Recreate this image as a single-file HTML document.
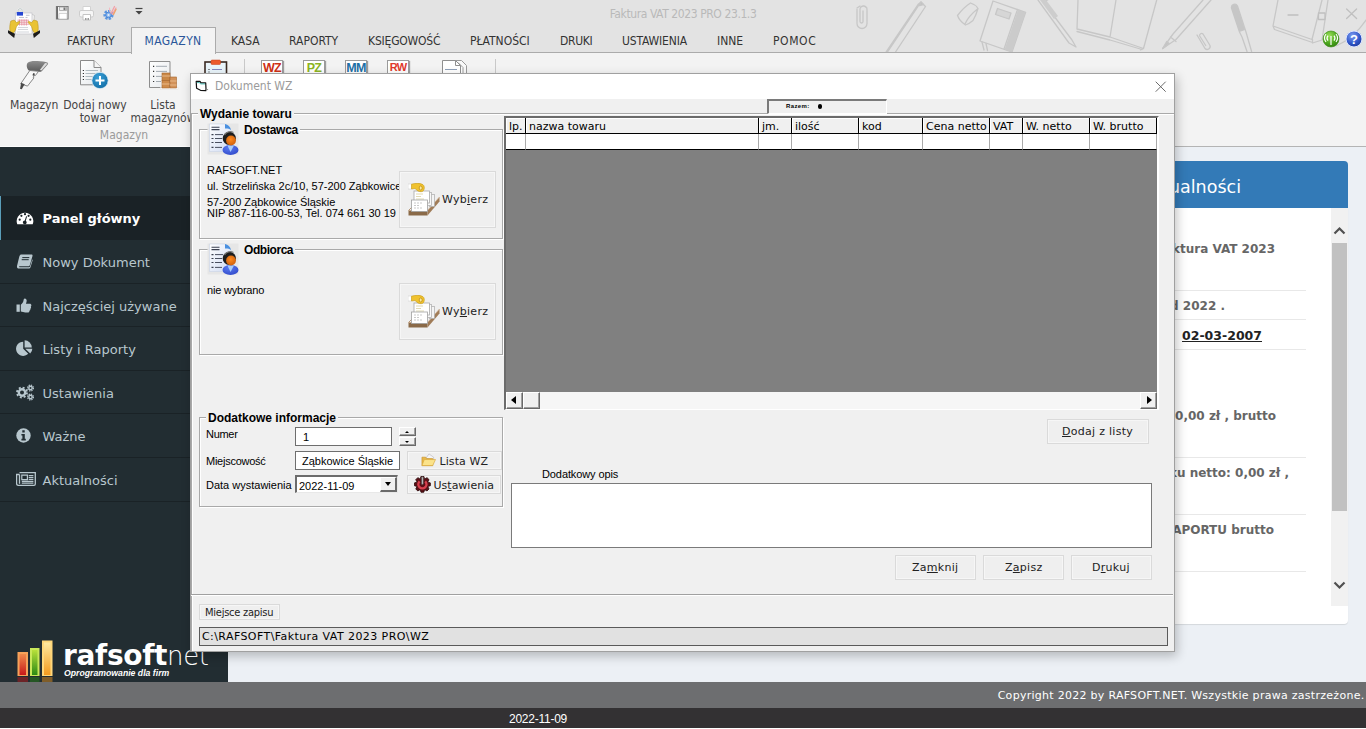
<!DOCTYPE html>
<html lang="pl">
<head>
<meta charset="utf-8">
<title>Faktura VAT 2023 PRO 23.1.3</title>
<style>
*{box-sizing:border-box;margin:0;padding:0}
html,body{width:1366px;height:729px;overflow:hidden;background:#fff}
body{position:relative;font-family:"Liberation Sans",sans-serif;font-size:11px;color:#000}
.abs{position:absolute}
.seg{font-family:"DejaVu Sans Condensed","Liberation Sans",sans-serif;font-size:12px}
.ver{font-family:"DejaVu Sans","Liberation Sans",sans-serif}
/* ---------- ribbon ---------- */
#rtop{left:0;top:0;width:1366px;height:53px;background:#e3e3e3;border-bottom:1px solid #ababab;overflow:hidden}
#rbody{left:0;top:53px;width:1366px;height:94px;background:#f3f3f3;border-bottom:1px solid #b4b4b4}
#title{left:0;top:7.400px;width:1366px;text-align:center;color:#b9b9b9;font-size:12px;letter-spacing:-.41px}
.tab{top:34px;color:#333;white-space:nowrap;line-height:14px}
#tabact{left:131px;top:27px;width:85px;height:27px;background:#f3f3f3;border:1px solid #ababab;border-bottom:none}
.rlbl{color:#444;text-align:center;white-space:nowrap;line-height:13px}
/* ---------- sidebar ---------- */
#side{left:0;top:147px;width:228px;height:535px;background:#222d32}
.mi{left:0;width:228px;height:43.600px;box-shadow:inset 0 -1px 0 #1a2226;color:#b8c7ce;font-size:13px;line-height:16px}
.mi span{position:absolute;left:42.500px;top:15px;white-space:nowrap}
.mi svg{position:absolute;left:15.500px}
.mi.act{background:#1a2226;box-shadow:inset 1px 0 0 #5a9db8;color:#fff;font-weight:bold}
/* ---------- content ---------- */
#content{left:228px;top:147px;width:1138px;height:535px;background:#ecf0f5}
#foot{left:0;top:682px;width:1366px;height:26px;background:#6d6e70;color:#fff}
#status{left:0;top:708px;width:1366px;height:20px;background:#333133;color:#fff}
/* ---------- dialog ---------- */
#dlg{left:191px;top:74px;width:983px;height:577px;background:#f0f0f0;box-shadow:0 0 0 1px #a0a0a0,2px 4px 10px 1px rgba(0,0,0,.24);overflow:hidden}
#dtitle{left:0;top:0;width:984px;height:26px;background:#fff}
.gb{border:1px solid #a9a9a9;box-shadow:1px 1px 0 #fff, inset 1px 1px 0 #fff}
.leg{background:#f0f0f0;font-weight:bold;font-size:12px;line-height:14px;white-space:nowrap;padding:0 2px}
.btn{border:1px solid #dadada;background:#efefef;box-shadow:inset 0 0 0 1px #f6f6f6}
.btn .t{position:absolute;white-space:nowrap;font-family:"DejaVu Sans","Liberation Sans",sans-serif;font-size:11px;letter-spacing:.28px;line-height:14px;color:#222}
.txt{white-space:nowrap;line-height:13px}
u{text-decoration:underline}

.inp{background:#fff;border:1px solid #6e6e6e}
.inp span{position:absolute;top:3px;white-space:nowrap;line-height:13px;font-size:11px}
#datecb{background:#fff;border:1px solid #e8e8e8;border-top:2px solid #6c6c6c;border-left:2px solid #6c6c6c}
#dd{right:0;top:0;width:17px;height:15px;background:#f0f0f0;border:1px solid #fff;border-right:2px solid #6a6a6a;border-bottom:2px solid #6a6a6a}
#dd:after{content:"";position:absolute;left:4px;top:4px;border:3px solid transparent;border-top:4px solid #000;border-bottom:none}
#spin{}
#razem{border:2px solid #7a7a7a;border-right:1px solid #fff;border-bottom:1px solid #fff;background:#f0f0f0}
#grid{background:#808080;border:1px solid #fff;border-top:2px solid #6b6b6b;border-left:2px solid #6b6b6b}
.ico-person{width:32px;height:32px}

.hc{position:absolute;top:0;height:16px;background:#f0f0f0;border-right:1px solid #000;border-bottom:1px solid #000;box-shadow:inset 1px 1px 0 #fff;overflow:hidden}
.hc span{position:absolute;left:3px;top:2px;font-family:"DejaVu Sans","Liberation Sans",sans-serif;font-size:11px;line-height:14px;white-space:nowrap}
.dc{position:absolute;top:16px;height:16px;background:#fff;border-right:1px solid #aaa;border-bottom:1px solid #000}
#hsb{background:#f6f6f6}
.sbb{width:17px;height:17px;background:#f0f0f0;border:1px solid #fff;border-right-color:#696969;border-bottom-color:#696969;box-shadow:inset -1px -1px 0 #a0a0a0}
.sbb i{position:absolute;top:3px;border:4px solid transparent;border-left-width:0;border-right-width:0;width:0;height:0}

.smico{top:60px;width:22px;height:24px;background:#fff;border:1px solid #9b9b9b;box-shadow:1px 1px 1px rgba(0,0,0,.35);text-align:center;overflow:hidden}
.smico b{display:block;font-family:"Liberation Sans",sans-serif;font-size:12.500px;line-height:14px;margin:0 -3px 0 -3px;letter-spacing:-.7px}

.nw{font-family:"DejaVu Sans","Liberation Sans",sans-serif;font-weight:bold;font-size:12px;line-height:16px;color:#666;white-space:nowrap}
.hr{left:900px;width:178px;height:1px;background:#e8e8e8}

.sp{left:0;width:17px;height:9px;background:#f0f0f0;border:1px solid #fff;border-right-color:#696969;border-bottom-color:#696969;box-shadow:inset -1px -1px 0 #a0a0a0}
.sp i{position:absolute;left:5px;width:0;height:0;border-left:2px solid transparent;border-right:2px solid transparent}
</style>
</head>
<body>
<!-- RIBBON TOP -->
<div id="rtop" class="abs">
  <div id="title" class="abs seg">Faktura VAT 2023 PRO 23.1.3</div>
</div>
<div id="rbody" class="abs"></div>
<div id="tabact" class="abs"></div>
<div class="abs" style="left:0;top:146px;width:228px;height:1px;background:#fcfcfc"></div>
<div class="abs tab seg" style="left:67px;letter-spacing:.17px">FAKTURY</div>
<div class="abs tab seg" style="left:144.500px;color:#2b579a;letter-spacing:.4px">MAGAZYN</div>
<div class="abs tab seg" style="left:231px">KASA</div>
<div class="abs tab seg" style="left:289px">RAPORTY</div>
<div class="abs tab seg" style="left:368px;letter-spacing:-.2px">KSIĘGOWOŚĆ</div>
<div class="abs tab seg" style="left:470px">PŁATNOŚCI</div>
<div class="abs tab seg" style="left:560px;letter-spacing:-.3px">DRUKI</div>
<div class="abs tab seg" style="left:622px;letter-spacing:-.15px">USTAWIENIA</div>
<div class="abs tab seg" style="left:717px">INNE</div>
<div class="abs tab seg" style="left:773px;letter-spacing:.6px">POMOC</div>


<!-- header art -->
<svg class="abs" style="left:840px;top:0" width="526" height="52" viewBox="840 0 526 52" fill="none" stroke="#c7c7c7" stroke-width="1.300" stroke-linecap="round" stroke-linejoin="round">
  <path d="M857 9.500v14a5 5 0 0 0 10 0v-14a3.500 3.500 0 0 0-7 0v12a1.500 1.500 0 0 0 3 0v-10.500M857 8l3-2M867 8l-3-2"/>
  <path d="M921 2l-33.500 50M925.500 6.500l-30 45.500M918 4.500l-32 47.500M921 2l4.500 4.500M921 2l-3 2.500"/><path d="M921 2l2.500 2.500-4 1z" fill="#c0c0c0"/>
  <path d="M957.500 15.500q6-8 13-12.500 5 1.500 7.500 5.500-2 7-5 12-4 3.500-7.500 4.500-6-4-8-9.500zM965 24q3.500-8 12.500-15"/>
  <path d="M993 1l32.600 11.400-13.600 39.600-32-11zM1017.500 9.500l-13.500 39.500"/>
  <path d="M1018 9.700l7.600 2.700-13.600 39.600-7.500-2.500z" fill="#cbcbcb" stroke="none"/>
  <path d="M997.500 8.500l13.500 4.500-2 6-13.500-4.500z" fill="#d6d6d6"/>
  <path d="M982 42l2 8M986 43.500l1.500 7"/>
  <path d="M1042 0l30 40 4 7-7-4-31-43M1044 2l5-3" /><path d="M1040 0h6l12 16-4 3z" fill="#cdcdcd" stroke="none"/>
  <path d="M1078 0l-1 29 33 8 33.500 11.500 13.200-48.500M1110 37l6-37M1077 31.500l33 8.500 32 9.500M1143.500 48.500l-3 1.500"/>
  <path d="M1203 0l-30 34-10.300 14.500 13.300-9 35-39.500M1170.500 37l5.500 4.500"/><path d="M1162.700 48.500l4-7 2.500 2z" fill="#c4c4c4"/>
  <path d="M1197 35l8 13.500a3 3 0 0 0 5-3l-7-11.500a2 2 0 0 0-3.300 2l6 9.500"/>
  <path d="M1231.500 8a3.200 3.200 0 0 1 6-2l6.500 20 2 6 5.600 19.500M1231.500 8l8 24 2.500 5 5 14.500"/><path d="M1231.500 8a3.200 3.200 0 0 1 6-2l7.500 24-5.500 2z" fill="#c6c6c6" stroke="none"/>
  <path d="M1278 0l-5 26 39 13.500 10-39.500M1273 26l1.500 3.500 38 13 0-3M1328 0l-6 40-9.500 3M1366 20q-12 18-30 26"/>
  <path d="M1288 15h10M1318.500 13h6.500v6.500h-6.500zM1346.600 9l10 9.500M1356.600 9l-10 9.500" stroke="#c0c0c0"/>
</svg>
<!-- round icons -->
<svg class="abs" style="left:1322px;top:29px" width="42" height="20" viewBox="0 0 42 20">
  <defs>
    <radialGradient id="gg" cx=".4" cy=".3" r=".8"><stop offset="0" stop-color="#9be05a"/><stop offset=".6" stop-color="#4aa51c"/><stop offset="1" stop-color="#2d7a10"/></radialGradient>
    <radialGradient id="gb" cx=".4" cy=".3" r=".8"><stop offset="0" stop-color="#7d9cf0"/><stop offset=".6" stop-color="#2f55c8"/><stop offset="1" stop-color="#1b3590"/></radialGradient>
  </defs>
  <circle cx="9" cy="10" r="8" fill="url(#gg)" stroke="#3a8a14" stroke-width=".6"/>
  <path d="M9 7v9M6 6.5a4 4 0 0 0 0 5M12 6.5a4 4 0 0 1 0 5M4 5a6.5 6.5 0 0 0 0 8M14 5a6.5 6.5 0 0 1 0 8" stroke="#fff" stroke-width="1.2" fill="none"/>
  <circle cx="32" cy="10" r="8" fill="url(#gb)" stroke="#dfe6ff" stroke-width="1"/>
  <text x="32" y="14.5" text-anchor="middle" font-family="Liberation Sans, sans-serif" font-weight="bold" font-size="13" fill="#fff">?</text>
</svg>
<!-- app icon -->
<svg class="abs" style="left:6px;top:6px" width="36" height="34" viewBox="6 6 36 34">
  <path d="M18.200 12.500v-2a2 2 0 0 1 4 0v2" fill="none" stroke="#f4f4f4" stroke-width="1.300"/>
  <path d="M18.200 12.500v-2a2 2 0 0 1 4 0v2" fill="none" stroke="#9aa" stroke-width=".5"/>
  <path d="M31 14l3.500 1.500-2 17-3-.5z" fill="#f2f2f2" stroke="#b8b8b8" stroke-width=".6"/>
  <rect x="15.300" y="13" width="16.700" height="21" fill="#fdfdfd" stroke="#c2c2c8" stroke-width=".7"/>
  <rect x="16.800" y="12" width="6.200" height="3.600" fill="#2546d2"/>
  <path d="M19 17.500h5M25.500 17.500h2M26 15.300h3.500" stroke="#aab" stroke-width=".7"/>
  <path d="M17.500 20.200h11.500M17.500 22.200h11.500M17.500 24.200h11.500M19.500 19.500v6M21.800 19.500v6M24.100 19.500v6M26.400 19.500v6" stroke="#e38a9a" stroke-width=".8"/>
  <path d="M18 27.500h10M18 29.500h10M17 32h12" stroke="#c8ccd2" stroke-width=".8"/>
  <path d="M10 31.500c-.5-3.500-.3-7 .8-10.500l3.500-1 2 2.500 3.300-1.300c.5.700.2 1.500-.3 2l-2.800 3.300-1.500 4.500-2 2.500z" fill="#e9c334" stroke="#b58d12" stroke-width=".5"/>
  <path d="M38 31.500c.5-3.500.3-7-.8-10.500l-3.500-1-2 2.500-3.300-1.300c-.5.700-.2 1.500.3 2l2.800 3.300 1.500 4.500 2 2.500z" fill="#e9c334" stroke="#b58d12" stroke-width=".5"/>
  <path d="M8 30.200l7 3.500-.8 4.300-6.200-5z" fill="#1c1c1c"/>
  <path d="M40 30.200l-7 3.500.8 4.300 6.200-5z" fill="#1c1c1c"/>
</svg>
<!-- quick access -->
<svg class="abs" style="left:54px;top:4px" width="92" height="18" viewBox="0 0 92 18">
  <path d="M2.500 2.500h11.500v12.500h-11.500z" fill="#f6f6f6" stroke="#7c7c7c" stroke-width="1.200"/>
  <path d="M3.300 2.500v12.500" stroke="#6a6a6a" stroke-width="1.400"/>
  <path d="M5.500 3h7v3.500h-7z" fill="#ececec" stroke="#9a9a9a" stroke-width=".7"/><path d="M9.500 3.500h2v2.500h-2z" fill="#777"/>
  <path d="M5 9.500h8v5.500h-8z" fill="#fff" stroke="#bdbdbd" stroke-width=".6"/>
  <path d="M29 2.500h7.500v4.500h-7.500z" fill="#fff" stroke="#d2d2d2"/><rect x="25.500" y="6.500" width="14" height="6.500" rx="1.500" fill="#f6f6f6" stroke="#cdcdcd"/><path d="M29 10.500h7.500v5.500h-7.500z" fill="#fff" stroke="#c4c4c4"/><path d="M31 14h1.500v2h-1.500zM33.500 14h1.500v2h-1.500z" fill="#9a9a9a"/>
  <circle cx="54.500" cy="11" r="3.800" fill="none" stroke="#5a96e0" stroke-width="2.600" stroke-dasharray="2.200 1.200"/><circle cx="54.500" cy="11" r="2.800" fill="#8ab8ee" stroke="#4a86d8" stroke-width="1"/><circle cx="54.500" cy="11" r="1.100" fill="#e8eef8"/>
  <path d="M57 9.500l3.500-7M58.500 10l3.500-6" stroke="#f2a0a8" stroke-width="1.300" stroke-linecap="round"/><path d="M59.500 10.500l2.500-5" stroke="#f0a264" stroke-width="1.300" stroke-linecap="round"/><path d="M56 8l-.5-4" stroke="#f4b8c0" stroke-width="1.100" stroke-linecap="round"/>
  <path d="M81.500 4.500h7" stroke="#444" stroke-width="1.200"/><path d="M81.500 7h7l-3.500 3.500z" fill="#444"/>
</svg>
<!-- ribbon big icons -->
<svg class="abs" style="left:16px;top:58px" width="36" height="34" viewBox="16 58 36 34">
  <defs><linearGradient id="sh" x1="0" y1="0" x2="0" y2="1"><stop offset="0" stop-color="#8e8e8e"/><stop offset="1" stop-color="#5a5a5a"/></linearGradient></defs>
  <path d="M27.500 63c2-2 6-2.300 10-2 4 .2 8 .8 10.300 1.800.6.500.3 1.200-.3 1.900l-5.800 6.500c-1 .5-2 .6-3 .5l-8.500-.7c-2.800-.3-4.500-5.500-2.700-8z" fill="url(#sh)"/>
  <path d="M47.600 63.400l-6 7-1.800-.5 5.300-6.900z" fill="#dcdcdc"/>
  <path d="M29.800 70.500l8.800.8-3.200 4.200-1.200-.2-1 2.200.8.300-6.500 8.300-6.800-2.300z" fill="#f8f8f8" stroke="#7a7a7a" stroke-width=".9" stroke-linejoin="round"/>
  <path d="M33.200 75.500l1-2.200" stroke="#444" stroke-width="1.800"/>
  <path d="M21 82.800l3.800 1.500-1.200 1.800-1.800 3.200-1.800-.6.700-3.300z" fill="#4a4a4a"/>
</svg>
<svg class="abs" style="left:78px;top:58px" width="34" height="34" viewBox="78 58 34 34">
  <defs><linearGradient id="dg" x1="0" y1="0" x2="1" y2="1"><stop offset="0" stop-color="#fff"/><stop offset="1" stop-color="#e6e9ec"/></linearGradient>
  <radialGradient id="pb" cx=".4" cy=".3" r=".8"><stop offset="0" stop-color="#3aa0d8"/><stop offset="1" stop-color="#0f6aa2"/></radialGradient></defs>
  <path d="M80.500 60.500h13.500l7 7v17.300h-20.500z" fill="url(#dg)" stroke="#8b8b8b"/>
  <path d="M94 60.500v7h7" fill="#f4f4f4" stroke="#8b8b8b"/>
  <path d="M85.500 70.500h12.500M85.500 73.500h12.500M85.500 76.500h12.500M85.500 79.500h12.500" stroke="#a9b4bb" stroke-width=".9"/>
  <path d="M82.800 70.500h1.200M82.800 73.500h1.200M82.800 76.500h1.200M82.800 79.500h1.200" stroke="#333" stroke-width="1.100"/>
  <circle cx="100" cy="80.500" r="8.200" fill="url(#pb)" stroke="#e9f3f9" stroke-width=".8"/>
  <path d="M95.500 80.500h9M100 76v9" stroke="#fff" stroke-width="2"/>
</svg>
<svg class="abs" style="left:147px;top:58px" width="34" height="34" viewBox="147 58 34 34">
  <path d="M149.500 61.500h20.500v26h-20.500z" fill="url(#dg)" stroke="#8d8d8d"/>
  <path d="M156 66.300h11M156 71.400h11M156 76.400h6M156 81.500h5" stroke="#9aa3aa" stroke-width=".9"/>
  <path d="M153 66.300h1.200M153 71.400h1.200M153 76.400h1.200M153 81.500h1.200" stroke="#333" stroke-width="1.200"/>
  <rect x="160.500" y="87.500" width="17.500" height="1.800" fill="#fff" stroke="#ddd" stroke-width=".4"/>
  <rect x="162" y="73" width="8" height="7.500" fill="#c98746" stroke="#a5652c" stroke-width=".6"/>
  <rect x="162" y="80.500" width="7.500" height="7.500" fill="#cf8c4c" stroke="#a5652c" stroke-width=".6"/>
  <rect x="170" y="77" width="6.500" height="11" fill="#d2925a" stroke="#a5652c" stroke-width=".6"/>
  <path d="M162 76h8M162 84h7.500M170 81h6.500M170 85h6.500" stroke="#e8b888" stroke-width="1"/>
</svg>
<svg class="abs" style="left:203px;top:59px" width="26" height="30" viewBox="203 59 26 30">
  <rect x="205" y="62" width="21.500" height="26" fill="#eaf5fb" stroke="#3b2a22" stroke-width="1.600"/>
  <rect x="211" y="60" width="9.500" height="4.500" rx="1" fill="#ec5a2c" stroke="#c43d14" stroke-width=".5"/>
  <path d="M208.500 69.500h1M208.500 72h1" stroke="#222" stroke-width="1.200"/><path d="M212 69.500h10" stroke="#88b" stroke-width="1"/>
</svg>
<div class="abs" style="left:244px;top:59px;width:1px;height:80px;background:#c9c9c9"></div>
<div class="abs" style="left:495px;top:59px;width:1px;height:80px;background:#c9c9c9"></div>
<div class="abs smico" style="left:261px"><b style="color:#cf3015">WZ</b></div>
<div class="abs smico" style="left:303px"><b style="color:#8cb423">PZ</b></div>
<div class="abs smico" style="left:345px"><b style="color:#1d6fa5">MM</b></div>
<div class="abs smico" style="left:387px"><b style="color:#e0392b;font-size:11px;margin-top:-1px">RW</b></div>
<svg class="abs" style="left:441px;top:59px" width="28" height="20" viewBox="441 59 28 20">
  <path d="M451.500 60.500h10l5 5v14h-15z" fill="#fafafa" stroke="#9a9a9a"/>
  <path d="M448 62.500h10l5 5v14h-15z" fill="#fff" stroke="#9a9a9a"/>
  <path d="M442.500 60.500h13l5 5v14h-18z" fill="#fff" stroke="#8f8f8f"/><path d="M455.500 60.500v5h5" fill="none" stroke="#8f8f8f"/>
  <path d="M445 69.500h12" stroke="#8fa0b8" stroke-width="1"/>
</svg>

<!-- RIBBON BODY LABELS -->
<div class="abs rlbl seg" style="left:10px;top:99px;width:48px">Magazyn</div>
<div class="abs rlbl seg" style="left:55px;top:99px;width:80px">Dodaj nowy<br>towar</div>
<div class="abs rlbl seg" style="left:123px;top:99px;width:80px">Lista<br>magazynów</div>
<div class="abs rlbl seg" style="left:84px;top:129px;width:80px;color:#9a9a9a">Magazyn</div>

<!-- SIDEBAR -->
<div id="side" class="abs">
  <div class="abs mi act ver" style="top:49.4px"><svg style=top:14.6px width="18" height="14" viewBox="0 0 18 14"><path d="M1.300 13.200A8.300 8.300 0 1 1 16.700 13.200z" fill="currentColor"/><g fill="#1a2226"><circle cx="3.700" cy="8.700" r="1.100"/><circle cx="5.400" cy="4.800" r="1.100"/><circle cx="9" cy="3.200" r="1.100"/><circle cx="12.600" cy="4.800" r="1.100"/><circle cx="14.300" cy="8.700" r="1.100"/><path d="M10.100 5.200l1 .3-1.300 4.300a1.900 1.900 0 1 1-1-.3z"/></g></svg><span>Panel główny</span></div>
  <div class="abs mi ver" style="top:93px"><svg style=top:14.0px width="17" height="15" viewBox="0 0 17 15"><path d="M5.200.6h10.300c.9 0 1.200.7 1 1.400l-2.600 9c-.3.900-.9 1.300-1.700 1.300H3.400c-.4.300-.4.900.2 1h9.300c.5 0 .9-.2 1.100-.7l2.300-7.300c.4.600.3 1 .2 1.500l-2 6.500c-.3.900-1 1.300-1.800 1.300H3c-1.300 0-2.400-1.100-2-2.700L3.200 3c.4-1.400 1-2.400 2-2.400z" fill="currentColor"/><path d="M6.300 3.600h7M5.700 5.700h7" stroke="#222d32" stroke-width="1"/></svg><span>Nowy Dokument</span></div>
  <div class="abs mi ver" style="top:136.6px"><svg style=top:14.4px width="16" height="15" viewBox="0 0 16 15"><path d="M.5 6.500h3.300v7.300H.5z" fill="currentColor"/><path d="M4.800 6.700c1.600-1 2.400-2.600 2.700-4.200.2-1.300.5-2 1.300-2 1.200 0 1.900 1 1.900 2.300 0 1-.4 2-.8 2.900h3.800c1 0 1.700.7 1.700 1.500 0 .6-.3 1-.6 1.300.3.400.4.900.2 1.400-.1.400-.4.700-.7.900.2.500.1 1-.1 1.300-.2.400-.5.600-.8.700.1.400 0 .8-.3 1.100-.4.400-1 .5-1.700.5H9.300c-1.600 0-3-.5-4.500-.9z" fill="currentColor"/></svg><span>Najczęściej używane</span></div>
  <div class="abs mi ver" style="top:180.2px"><svg style=top:12.8px width="17" height="16" viewBox="0 0 17 16"><path d="M7.200 1.700v7.100l5 5A7.100 7.100 0 1 1 7.200 1.700z" fill="currentColor"/><path d="M8.600.3a7.200 7.200 0 0 1 7.200 7.200H8.600z" fill="currentColor"/><path d="M9.300 8.700h7a7.100 7.100 0 0 1-2.100 4.900z" fill="currentColor"/></svg><span>Listy i Raporty</span></div>
  <div class="abs mi ver" style="top:223.8px"><svg style=top:13.2px width="19" height="17" viewBox="0 0 19 17"><g fill="none" stroke="currentColor"><circle cx="6" cy="8.500" r="3.200" stroke-width="2.400"/><circle cx="6" cy="8.500" r="5" stroke-width="1.800" stroke-dasharray="2 1.930"/><circle cx="14.500" cy="4" r="1.700" stroke-width="1.500"/><circle cx="14.500" cy="4" r="2.900" stroke-width="1.300" stroke-dasharray="1.300 .98"/><circle cx="14.500" cy="13" r="1.700" stroke-width="1.500"/><circle cx="14.500" cy="13" r="2.900" stroke-width="1.300" stroke-dasharray="1.300 .98"/></g></svg><span>Ustawienia</span></div>
  <div class="abs mi ver" style="top:267.4px"><svg style=top:13.6px width="15" height="15" viewBox="0 0 15 15"><circle cx="7.500" cy="7.500" r="7.200" fill="currentColor"/><path d="M6.300 2.300h2.400v2.100H6.300zM5.400 5.900h3.400v4.800h1v1.700H5.400v-1.700h1V7.600h-1z" fill="#222d32"/></svg><span>Ważne</span></div>
  <div class="abs mi ver" style="top:311px"><svg style=top:14.0px width="20" height="14" viewBox="0 0 20 14"><path d="M3.500.7h15.800v11.300c0 .8-.6 1.300-1.300 1.300H2.200A1.700 1.700 0 0 1 .6 11.600V2.500h2.900" fill="none" stroke="currentColor" stroke-width="1.300"/><path d="M3.500 2.500v9.300" stroke="currentColor" stroke-width="1.300"/><path d="M5.800 3.200h5.600v4.500H5.800zM12.700 3.600h4.700M12.700 5.500h4.700M12.700 7.400h4.700M5.800 9.300h11.600M5.800 11.100h11.600" stroke="currentColor" stroke-width="1.200" fill="none"/></svg><span>Aktualności</span></div>
  <svg class="abs" style="left:14px;top:489px" width="44" height="46" viewBox="14 636 44 46">
    <defs>
      <linearGradient id="lr" x1="0" y1="0" x2="0" y2="1"><stop offset="0" stop-color="#f08a4a"/><stop offset="1" stop-color="#c8181a"/></linearGradient>
      <linearGradient id="lg" x1="0" y1="0" x2="0" y2="1"><stop offset="0" stop-color="#b8e03a"/><stop offset="1" stop-color="#2a8a14"/></linearGradient>
      <linearGradient id="ly" x1="0" y1="0" x2="0" y2="1"><stop offset="0" stop-color="#ffe9a0"/><stop offset="1" stop-color="#f29a1e"/></linearGradient>
    </defs>
    <rect x="17.500" y="652" width="10.500" height="24" fill="#f6a25a"/><rect x="19.500" y="654" width="6.500" height="21" fill="url(#lr)"/>
    <rect x="30" y="648" width="9.500" height="28" fill="#c8e85a"/><rect x="32" y="650" width="5.500" height="25" fill="url(#lg)"/>
    <rect x="42" y="640.500" width="10.500" height="35.500" fill="#ffd77a"/><rect x="44" y="642.500" width="6.500" height="32.500" fill="url(#ly)"/>
    <rect x="17.500" y="677" width="10.500" height="5" fill="#c8181a" opacity=".45"/><rect x="30" y="677" width="9.500" height="5" fill="#2a8a14" opacity=".45"/><rect x="42" y="677" width="10.500" height="5" fill="#f29a1e" opacity=".45"/>
  </svg>
  <div class="abs ver" style="left:63px;top:492px;font-weight:bold;font-size:28px;line-height:34px;color:#fff;white-space:nowrap;letter-spacing:-.33px">rafsoft<span style="font-weight:normal;font-family:'DejaVu Sans ExtraLight','DejaVu Sans Light','DejaVu Sans',sans-serif;font-size:26px">net</span></div>
  <div class="abs" style="left:64px;top:520.5px;font:italic bold 8.700px/11px 'Liberation Sans',sans-serif;color:#fff;white-space:nowrap">Oprogramowanie dla firm</div>
</div>

<!-- CONTENT -->
<div id="content" class="abs">
  <!-- coordinates relative to (228,148) -->
  <div class="abs" style="left:900px;top:14px;width:220px;height:47px;background:#337ab7;border-radius:4px 4px 0 0"></div>
  <div class="abs ver" style="left:900px;top:29px;width:113px;text-align:right;color:#fff;font-size:17.500px;line-height:22px;white-space:nowrap;direction:rtl"><span style="direction:ltr;unicode-bidi:bidi-override">Aktualności</span></div>
  <div class="abs" style="left:900px;top:61px;width:220px;height:416px;background:#fff;border-radius:0 0 4px 4px;box-shadow:0 1px 1px rgba(0,0,0,.1)"></div>
  <div class="abs" style="left:1103px;top:61px;width:17px;height:398px;background:#f1f1f1"></div>
  <div class="abs" style="left:1104px;top:96px;width:15px;height:268px;background:#c1c1c1"></div>
  <svg class="abs" style="left:1104px;top:78px" width="15" height="12" viewBox="0 0 15 12"><path d="M2.500 8.500l5-5 5 5" fill="none" stroke="#505050" stroke-width="2.200"/></svg>
  <svg class="abs" style="left:1104px;top:432px" width="15" height="12" viewBox="0 0 15 12"><path d="M2.500 3.500l5 5 5-5" fill="none" stroke="#505050" stroke-width="2.200"/></svg>
  <div class="abs nw" style="right:91px;top:94px">Nowa wersja programu Faktura VAT 2023</div>
  <div class="abs hr" style="top:143px"></div>
  <div class="abs nw" style="right:141px;top:151px">Aktualizacja z dnia 9 listopad 2022 .</div>
  <div class="abs hr" style="top:172px"></div>
  <div class="abs nw" style="right:104px;top:181px;color:#222"><span style="color:#666;margin-right:14px">Działamy od</span><u style="font-size:12.500px">02-03-2007</u></div>
  <div class="abs hr" style="top:202px"></div>
  <div class="abs nw" style="right:90px;top:261px">Sprzedaż netto: 0,00 zł , brutto</div>
  <div class="abs hr" style="top:310px"></div>
  <div class="abs nw" style="right:77px;top:318px">Zakupy w tym roku netto: 0,00 zł ,</div>
  <div class="abs hr" style="top:367px"></div>
  <div class="abs nw" style="right:92px;top:375px">Wartość RAPORTU brutto</div>
  <div class="abs hr" style="top:424px"></div>
</div>

<!-- FOOTER -->
<div id="foot" class="abs ver"><div class="abs" style="right:1.500px;top:7px;font-size:11px;letter-spacing:.28px;line-height:14px;white-space:nowrap">Copyright 2022 by RAFSOFT.NET. Wszystkie prawa zastrzeżone.</div></div>
<div id="status" class="abs"><div class="abs" style="left:509px;top:4.500px;font-size:12px;letter-spacing:-.25px;line-height:13px">2022-11-09</div></div>

<!-- DIALOG -->
<div id="dlg" class="abs"><div class="abs" id="dinner" style="left:0;top:-1px;width:984px;height:579px">
  <svg class="abs" width="0" height="0" style="left:0;top:0"><defs>
    <linearGradient id="pdoc" x1="0" y1="0" x2="1" y2="1"><stop offset="0" stop-color="#fff"/><stop offset="1" stop-color="#cfdaf2"/></linearGradient>
    <radialGradient id="pface" cx=".45" cy=".4" r=".7"><stop offset="0" stop-color="#ff8a1e"/><stop offset="1" stop-color="#c85a0a"/></radialGradient>
    <radialGradient id="pbody" cx=".4" cy=".3" r=".8"><stop offset="0" stop-color="#5a7af0"/><stop offset="1" stop-color="#2f48c8"/></radialGradient>
    <linearGradient id="tray" x1="0" y1="0" x2="0" y2="1"><stop offset="0" stop-color="#b08a64"/><stop offset="1" stop-color="#7a5a3c"/></linearGradient>
  </defs></svg>
  <div id="dtitle" class="abs"><div class="abs seg" style="left:24px;top:6px;color:#9b9b9b;line-height:14px">Dokument WZ</div>
    <svg class="abs" style="left:4px;top:7px" width="16" height="14" viewBox="0 0 16 14"><path d="M1.200 1.400h3.800l1 1.400h4.700l.3 6.200-.2 1.700-5.300-.4-3.900-2z" fill="#fff" stroke="#111" stroke-width="1.200" stroke-linejoin="round"/><path d="M1.900 2.600h2.700l.9 1.300h4.600" fill="none" stroke="#49b7b0" stroke-width="1"/><path d="M11.600 8.800l1.800.8-1.800.9z" fill="#777"/></svg>
    <svg class="abs" style="left:963.500px;top:7.500px" width="12" height="12" viewBox="0 0 12 12"><path d="M.7.700l10 10M10.700.700l-10 10" stroke="#6a6a6a" stroke-width="1" fill="none"/></svg>
  </div>

  <!-- outer group: Wydanie towaru -->
  <div class="abs gb" style="left:0;top:40px;width:990px;height:600px;border-right:none;border-bottom:none"></div>
  <div class="abs leg" style="left:7px;top:34px">Wydanie towaru</div>

  <!-- Dostawca -->
  <div class="abs gb" style="left:8px;top:56px;width:304px;height:110px"></div>
  <div class="abs leg" style="left:47px;top:50px;padding-left:6px;letter-spacing:-.25px">Dostawca</div>
  <svg class="abs" style="left:16px;top:50px" width="32" height="32" viewBox="0 0 32 32">
    <rect x=".5" y=".5" width="31" height="31" fill="#e6e6e6"/>
    <path d="M2.500 1h15.500l6 6v21.500h-21.500z" fill="url(#pdoc)" stroke="#c9d3e6" stroke-width=".6"/>
    <path d="M18 1c3 .5 5.500 3 6 6-2-1.500-4-1.800-6-1.500z" fill="#4a90e0"/>
    <path d="M4.500 4.300h8M4.500 6.600h8" stroke="#3a4050" stroke-width="1.100"/>
    <path d="M4.500 11.600h2M4.500 15.500h2M4.500 19.500h2M4.500 24.400h2" stroke="#3a4050" stroke-width="1.100"/>
    <path d="M8 11.600h8M8 15.500h7M8 19.500h7M8 24.400h7" stroke="#4a5060" stroke-width="1"/>
    <ellipse cx="23.500" cy="27" rx="8" ry="5" fill="url(#pbody)"/>
    <path d="M20.500 22.500l3 6.500 3.500-6.500z" fill="#a8cdfa"/>
    <circle cx="22.300" cy="15.300" r="6.600" fill="#1d1d1d"/>
    <path d="M17.500 12a6.600 6.600 0 0 1 9-2.500" stroke="#777" stroke-width="1.200" fill="none"/>
    <circle cx="24" cy="17.500" r="4.900" fill="url(#pface)"/>
  </svg>
  <div class="abs txt" style="left:16px;top:91px">RAFSOFT.NET</div>
  <div class="abs txt" style="left:16px;top:107px">ul. Strzelińska 2c/10, 57-200 Ząbkowice</div>
  <div class="abs txt" style="left:16px;top:123px">57-200 Ząbkowice Śląskie</div>
  <div class="abs txt" style="left:16px;top:134px">NIP 887-116-00-53, Tel. 074 661 30 19</div>
  <div class="abs btn" style="left:208px;top:98px;width:97px;height:57px"><svg class="abs" style="left:8px;top:11px" width="32" height="34" viewBox="0 0 32 34">
      <path d="M.5 27.500h19v5h-19z" fill="#8a6a48"/><path d="M19.500 27.500l12-13.500v4.500l-12 14z" fill="#a07c58"/><path d="M.5 27.500l5-5h9" fill="none" stroke="#b89878" stroke-width="1"/>
      <path d="M.5 27.500h19l12-13.500" fill="none" stroke="#c8a888" stroke-width=".8"/>
      <rect x="21.500" y="11.500" width="5" height="12" fill="#f4f4f4" stroke="#aaa" stroke-width=".7"/>
      <rect x="18.500" y="9.500" width="5" height="13" fill="#f8f8f8" stroke="#aaa" stroke-width=".7"/>
      <rect x="6" y="8" width="15.500" height="12" fill="#fff" stroke="#a8a8a8" stroke-width=".8"/>
      <path d="M8 11h7M8 13.500h5M8 16h8" stroke="#d8cfa0" stroke-width=".8"/>
      <rect x="3.500" y="17" width="16" height="11.500" fill="#fff" stroke="#a0a0a0" stroke-width=".8"/>
      <path d="M6 20h8M6 22.500h6M6 25h9" stroke="#bbb" stroke-width=".8" stroke-dasharray="2 1"/>
      <rect x="0" y="1" width="4" height="5" fill="#fff" stroke="#ccc" stroke-width=".5"/>
      <path d="M3.500 1.200c4-1.200 9-1.200 11.500.5 1.500 1 1.800 4 .5 5.800-1 1.500-3.500 1.500-5.500.5l-3-2.500-3.500.5z" fill="#f0c22e" stroke="#c89a14" stroke-width=".6"/>
      <ellipse cx="12.700" cy="5" rx="1.500" ry="2" fill="#fbe9a0" stroke="#b8860b" stroke-width=".7"/>
    </svg><div class="t" style="left:42px;top:21px">Wyb<u>i</u>erz</div></div>

  <!-- Odbiorca -->
  <div class="abs gb" style="left:8px;top:176px;width:304px;height:106px"></div>
  <div class="abs leg" style="left:47px;top:170px;padding-left:6px;letter-spacing:-.45px">Odbiorca</div>
  <svg class="abs" style="left:16px;top:170px" width="32" height="32" viewBox="0 0 32 32">
    <rect x=".5" y=".5" width="31" height="31" fill="#e6e6e6"/>
    <path d="M2.500 1h15.500l6 6v21.500h-21.500z" fill="url(#pdoc)" stroke="#c9d3e6" stroke-width=".6"/>
    <path d="M18 1c3 .5 5.500 3 6 6-2-1.500-4-1.800-6-1.500z" fill="#4a90e0"/>
    <path d="M4.500 4.300h8M4.500 6.600h8" stroke="#3a4050" stroke-width="1.100"/>
    <path d="M4.500 11.600h2M4.500 15.500h2M4.500 19.500h2M4.500 24.400h2" stroke="#3a4050" stroke-width="1.100"/>
    <path d="M8 11.600h8M8 15.500h7M8 19.500h7M8 24.400h7" stroke="#4a5060" stroke-width="1"/>
    <ellipse cx="23.500" cy="27" rx="8" ry="5" fill="url(#pbody)"/>
    <path d="M20.500 22.500l3 6.500 3.500-6.500z" fill="#a8cdfa"/>
    <circle cx="22.300" cy="15.300" r="6.600" fill="#1d1d1d"/>
    <path d="M17.500 12a6.600 6.600 0 0 1 9-2.500" stroke="#777" stroke-width="1.200" fill="none"/>
    <circle cx="24" cy="17.500" r="4.900" fill="url(#pface)"/>
  </svg>
  <div class="abs txt" style="left:16px;top:211px;letter-spacing:-.2px">nie wybrano</div>
  <div class="abs btn" style="left:208px;top:210px;width:97px;height:57px"><svg class="abs" style="left:8px;top:11px" width="32" height="34" viewBox="0 0 32 34">
      <path d="M.5 27.500h19v5h-19z" fill="#8a6a48"/><path d="M19.500 27.500l12-13.500v4.500l-12 14z" fill="#a07c58"/><path d="M.5 27.500l5-5h9" fill="none" stroke="#b89878" stroke-width="1"/>
      <path d="M.5 27.500h19l12-13.500" fill="none" stroke="#c8a888" stroke-width=".8"/>
      <rect x="21.500" y="11.500" width="5" height="12" fill="#f4f4f4" stroke="#aaa" stroke-width=".7"/>
      <rect x="18.500" y="9.500" width="5" height="13" fill="#f8f8f8" stroke="#aaa" stroke-width=".7"/>
      <rect x="6" y="8" width="15.500" height="12" fill="#fff" stroke="#a8a8a8" stroke-width=".8"/>
      <path d="M8 11h7M8 13.500h5M8 16h8" stroke="#d8cfa0" stroke-width=".8"/>
      <rect x="3.500" y="17" width="16" height="11.500" fill="#fff" stroke="#a0a0a0" stroke-width=".8"/>
      <path d="M6 20h8M6 22.500h6M6 25h9" stroke="#bbb" stroke-width=".8" stroke-dasharray="2 1"/>
      <rect x="0" y="1" width="4" height="5" fill="#fff" stroke="#ccc" stroke-width=".5"/>
      <path d="M3.500 1.200c4-1.200 9-1.200 11.500.5 1.500 1 1.800 4 .5 5.800-1 1.500-3.500 1.500-5.500.5l-3-2.500-3.500.5z" fill="#f0c22e" stroke="#c89a14" stroke-width=".6"/>
      <ellipse cx="12.700" cy="5" rx="1.500" ry="2" fill="#fbe9a0" stroke="#b8860b" stroke-width=".7"/>
    </svg><div class="t" style="left:42px;top:21px">Wy<u>b</u>ierz</div></div>

  <!-- Dodatkowe informacje -->
  <div class="abs gb" style="left:8px;top:344px;width:304px;height:90px"></div>
  <div class="abs leg" style="left:15px;top:338px">Dodatkowe informacje</div>
  <div class="abs txt" style="left:15px;top:355px;letter-spacing:-.3px">Numer</div>
  <div class="abs txt" style="left:15px;top:382px;letter-spacing:-.25px">Miejscowość</div>
  <div class="abs txt" style="left:15px;top:406px">Data wystawienia</div>
  <div class="abs inp" style="left:104px;top:354px;width:97px;height:19px"><span style="left:7px">1</span></div>
  <div class="abs inp" style="left:104px;top:378px;width:105px;height:19px"><span style="left:6px">Ząbkowice Śląskie</span></div>
  <div class="abs" id="datecb" style="left:104px;top:402px;width:103px;height:18px"><span class="abs txt" style="left:2px;top:3px">2022-11-09</span><div class="abs" id="dd"></div></div>
  <div class="abs" id="spin" style="left:208px;top:354px;width:17px;height:19px"><div class="abs sp" style="top:0"><i style="border-bottom:2px solid #000;top:3px"></i></div><div class="abs sp" style="top:10px"><i style="border-top:2px solid #000;top:3px"></i></div></div>
  <div class="abs btn" style="left:216px;top:378px;width:95px;height:19px"><svg class="abs" style="left:12.500px;top:1px" width="15" height="14" viewBox="0 0 16 15"><path d="M5 6l3.500-5 5 3.500v3z" fill="#f4f4f6" stroke="#b8b8c0" stroke-width=".7"/><path d="M1 4.500h4l1.200 1.500h6.300v7.500h-11.500z" fill="#e8b84a" stroke="#c8922a" stroke-width=".7"/><path d="M1 13.500l2.500-6.500h12l-3 6.500z" fill="#fbe38a" stroke="#d8a83a" stroke-width=".7"/></svg><div class="t" style="left:31.500px;top:3px;letter-spacing:.08px">Lista WZ</div></div>
  <div class="abs btn" style="left:216px;top:402px;width:94px;height:19px"><svg class="abs" style="left:5.500px;top:-.2px" width="17" height="17" viewBox="0 0 17 17"><path d="M6.98 0.33L9.82 0.33L10.44 2.45L11.09 2.72L13.03 1.65L15.05 3.67L13.98 5.61L14.25 6.26L16.37 6.88L16.37 9.72L14.25 10.34L13.98 10.99L15.05 12.93L13.03 14.95L11.09 13.88L10.44 14.15L9.82 16.27L6.98 16.27L6.36 14.15L5.71 13.88L3.77 14.95L1.75 12.93L2.82 10.99L2.55 10.34L0.43 9.72L0.43 6.88L2.55 6.26L2.82 5.61L1.75 3.67L3.77 1.65L5.71 2.72L6.36 2.45z" fill="#5a1016" stroke="#2a0608" stroke-width=".8" stroke-linejoin="round"/><path d="M5.600 5.300a4.100 4.100 0 1 0 5.600 0" fill="none" stroke="#d8404e" stroke-width="2.300"/><rect x="7.500" y=".8" width="1.800" height="7.600" rx=".6" fill="#c4c4c4" stroke="#444" stroke-width=".6"/></svg><div class="t" style="left:25.500px;top:2.500px;letter-spacing:0">Us<u>t</u>awienia</div></div>

  <!-- Razem box -->
  <div class="abs" id="razem" style="left:576px;top:26px;width:120px;height:15px"><span class="abs" style="left:17px;top:1px;font-size:6px;line-height:8px;font-weight:bold;letter-spacing:.4px">Razem:</span><span class="abs" style="left:49px;top:3px;width:4px;height:5px;background:#000;border-radius:2px"></span></div>

  <!-- grid -->
  <div class="abs" id="grid" style="left:313px;top:43px;width:655px;height:294px;border-right-width:2px">
    <div class="abs" id="ghead" style="left:0;top:0;width:651px;height:33px"><div class="hc" style="left:0px;width:20px"><span>lp.</span></div><div class="dc" style="left:0px;width:20px"></div><div class="hc" style="left:20px;width:233px"><span>nazwa towaru</span></div><div class="dc" style="left:20px;width:233px"></div><div class="hc" style="left:253px;width:33px"><span>jm.</span></div><div class="dc" style="left:253px;width:33px"></div><div class="hc" style="left:286px;width:67px"><span>ilość</span></div><div class="dc" style="left:286px;width:67px"></div><div class="hc" style="left:353px;width:64px"><span>kod</span></div><div class="dc" style="left:353px;width:64px"></div><div class="hc" style="left:417px;width:67px"><span>Cena netto</span></div><div class="dc" style="left:417px;width:67px"></div><div class="hc" style="left:484px;width:33px"><span>VAT</span></div><div class="dc" style="left:484px;width:33px"></div><div class="hc" style="left:517px;width:67px"><span>W. netto</span></div><div class="dc" style="left:517px;width:67px"></div><div class="hc" style="left:584px;width:67px"><span>W. brutto</span></div><div class="dc" style="left:584px;width:67px"></div></div>
    <div class="abs" id="hsb" style="left:0;bottom:0;width:651px;height:17px">
      <div class="abs sbb" style="left:0;top:0"><i style="border-right:5px solid #000;left:4px"></i></div>
      <div class="abs sbb" style="left:17px;top:0"></div>
      <div class="abs sbb" style="right:0;top:0"><i style="border-left:5px solid #000;left:6px"></i></div>
    </div>
  </div>

  <div class="abs btn" style="left:856px;top:346px;width:102px;height:25px"><div class="t" style="left:14px;top:5px"><u>D</u>odaj z listy</div></div>
  <div class="abs txt" style="left:351px;top:395px;letter-spacing:-.1px">Dodatkowy opis</div>
  <div class="abs" style="left:320px;top:410px;width:641px;height:65px;background:#fff;border:1px solid #7a7a7a"></div>
  <div class="abs btn" style="left:704px;top:482px;width:81px;height:25px"><div class="t" style="left:16px;top:5px">Za<u>m</u>knij</div></div>
  <div class="abs btn" style="left:792px;top:482px;width:81px;height:25px"><div class="t" style="left:21px;top:5px">Z<u>a</u>pisz</div></div>
  <div class="abs btn" style="left:880px;top:482px;width:81px;height:25px"><div class="t" style="left:20px;top:5px">D<u>r</u>ukuj</div></div>

  <div class="abs" style="left:0;top:521px;width:982px;height:2px;border-top:1px solid #a0a0a0;border-bottom:1px solid #fff"></div>
  <div class="abs btn" style="left:8px;top:531px;width:81px;height:16px"><div class="t" style="left:5px;top:1px;font-family:'DejaVu Sans Condensed','Liberation Sans',sans-serif;font-size:11px;letter-spacing:-.25px;line-height:13px">Miejsce zapisu</div></div>
  <div class="abs ver" style="left:8px;top:554px;width:969px;height:19px;background:#e1e1e1;border:1px solid #5a5a5a;font-size:11px;letter-spacing:.42px;line-height:17px;padding-left:2px;white-space:nowrap">C:\RAFSOFT\Faktura VAT 2023 PRO\WZ</div>
</div></div>
</body>
</html>
